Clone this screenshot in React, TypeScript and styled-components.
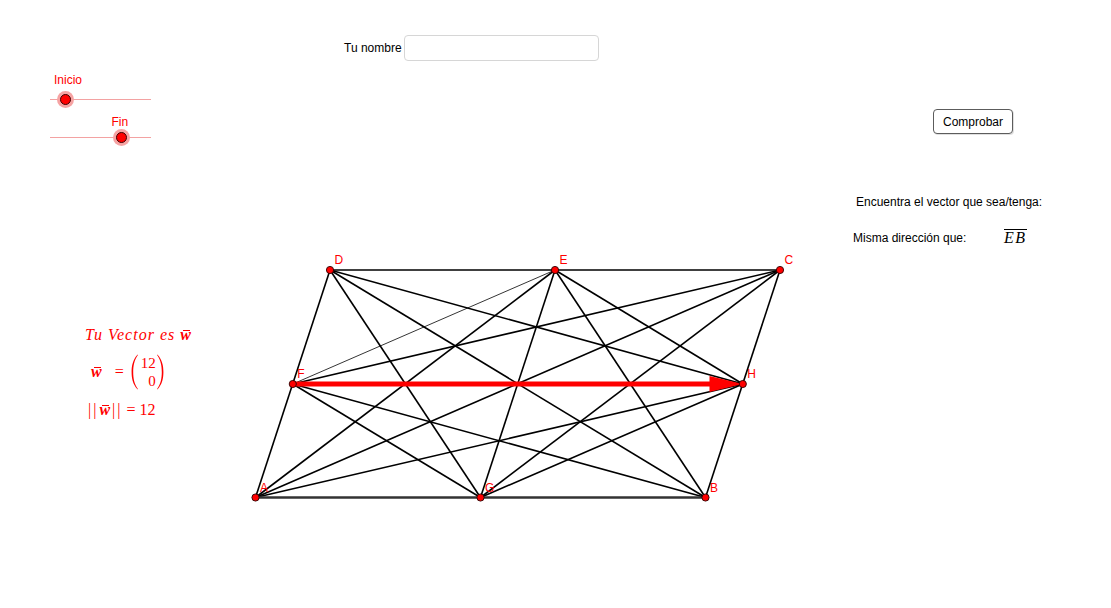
import React from "react";
import styled, { createGlobalStyle } from "styled-components";

const Global = createGlobalStyle`
  html, body { margin: 0; padding: 0; background: #fff; }
  body { font-family: "Liberation Sans", Arial, sans-serif; }
`;

const Applet = styled.div`
  position: relative;
  width: 1111px;
  height: 608px;
  overflow: hidden;
  background: #fff;
  font-family: "Liberation Sans", Arial, sans-serif;
  font-size: 12px;
  color: #000;
`;

/* ---------- sliders ---------- */
const SliderBox = styled.div<{ $x: number; $y: number; $w: number }>`
  position: absolute;
  left: ${(p) => p.$x}px;
  top: ${(p) => p.$y}px;
  width: ${(p) => p.$w}px;
  height: 1px;
`;

const Track = styled.div`
  position: absolute;
  left: 0;
  right: 0;
  top: 0;
  height: 1px;
  background: #f3a2a2;
`;

const Knob = styled.div`
  position: absolute;
  top: 0.5px;
  width: 11px;
  height: 11px;
  margin: -5.5px 0 0 -5.5px;
  box-sizing: border-box;
  border-radius: 50%;
  background: #ff0000;
  border: 1px solid #3b0000;
  box-shadow: 0 0 0 3px #f6a3a3;
`;

const SliderLabel = styled.span<{ $dx: number; $dy: number }>`
  position: absolute;
  left: ${(p) => p.$dx}px;
  top: ${(p) => p.$dy}px;
  color: #ff0000;
  font-size: 12px;
  line-height: 14px;
  white-space: nowrap;
`;

type SliderProps = {
  x: number;
  y: number;
  w: number;
  value: number;
  label: string;
  labelDx: number;
  labelDy: number;
};

const Slider = ({ x, y, w, value, label, labelDx, labelDy }: SliderProps) => (
  <SliderBox $x={x} $y={y} $w={w}>
    <SliderLabel $dx={labelDx} $dy={labelDy}>
      {label}
    </SliderLabel>
    <Track />
    <Knob style={{ left: `${value * w}px` }} />
  </SliderBox>
);

/* ---------- input ---------- */
const FieldRow = styled.label`
  position: absolute;
  left: 344px;
  top: 35px;
  display: flex;
  align-items: center;
  gap: 2px;
  font-size: 12px;
`;

const NameInput = styled.input`
  box-sizing: border-box;
  width: 195px;
  height: 26px;
  border: 1px solid #d6d6d6;
  border-radius: 4px;
  background: #fff;
  outline: none;
  padding: 0 6px;
  font: 12px "Liberation Sans", Arial, sans-serif;
`;

/* ---------- button ---------- */
const CheckButton = styled.button`
  position: absolute;
  left: 933px;
  top: 109px;
  box-sizing: border-box;
  width: 80px;
  height: 25px;
  padding: 0;
  background: #fff;
  border: 1px solid #5c5c5c;
  border-radius: 4px;
  box-shadow: 1px 1px 0 rgba(0, 0, 0, 0.12);
  font: 12px "Liberation Sans", Arial, sans-serif;
  color: #000;
`;

/* ---------- captions ---------- */
const Caption = styled.div<{ $x: number; $y: number }>`
  position: absolute;
  left: ${(p) => p.$x}px;
  top: ${(p) => p.$y}px;
  font-size: 12px;
  line-height: 14px;
  white-space: nowrap;
`;

const SegmentName = styled.span`
  position: absolute;
  left: 1004px;
  top: 229px;
  font-family: "Liberation Serif", "Times New Roman", serif;
  font-style: italic;
  font-size: 16px;
  letter-spacing: 1.5px;
  line-height: 16px;
  padding-right: 0.5px;
  border-top: 1px solid #000;
`;

/* ---------- math ---------- */
const MathLine = styled.div<{ $x: number; $y: number }>`
  position: absolute;
  left: ${(p) => p.$x}px;
  top: ${(p) => p.$y}px;
  display: flex;
  align-items: center;
  color: #ff0000;
  font-family: "Liberation Serif", "Times New Roman", serif;
  font-size: 16px;
  line-height: 18px;
  white-space: pre;
`;

const Italic = styled.span`
  font-style: italic;
  letter-spacing: 1px;
`;

const Vec = styled.span<{ $l?: number; $r?: number }>`
  position: relative;
  display: inline-block;
  margin-left: ${(p) => p.$l ?? 0}px;
  margin-right: ${(p) => p.$r ?? 0}px;
  font-style: italic;
  font-weight: bold;
  &::after {
    content: "";
    position: absolute;
    left: 2.5px;
    right: 1px;
    top: 4px;
    height: 1.2px;
    background: currentColor;
  }
`;

const Op = styled.span<{ $l?: number; $r?: number; $gap?: number }>`
  margin-left: ${(p) => p.$l ?? 0}px;
  margin-right: ${(p) => p.$r ?? 0}px;
  letter-spacing: ${(p) => p.$gap ?? 0}px;
`;

const Matrix = styled.span`
  display: inline-flex;
  align-items: stretch;
  height: 36px;
`;

const MatrixCol = styled.span`
  display: flex;
  flex-direction: column;
  align-items: flex-end;
  padding: 0 1px 0 3px;
  font-size: 15px;
  line-height: 18px;
`;

const Paren = ({ right }: { right?: boolean }) => (
  <svg width="7" height="36" viewBox="0 0 7 36" style={{ transform: right ? "scaleX(-1)" : undefined }}>
    <path d="M6.6,0.4 C1.6,6 0.6,12 0.6,18 C0.6,24 1.6,30 6.6,35.6 L6.9,35 C3.2,30 2.2,24 2.2,18 C2.2,12 3.2,6 6.9,1 Z" fill="#ff0000" />
  </svg>
);

/* ---------- geometry ---------- */
const Figure = styled.svg`
  position: absolute;
  left: 240px;
  top: 240px;
  overflow: visible;
`;

type Pt = { x: number; y: number };
const P: Record<string, Pt> = {
  A: { x: 255.5, y: 497.5 },
  G: { x: 480.5, y: 497.5 },
  B: { x: 705.5, y: 497.5 },
  F: { x: 292.8, y: 384 },
  H: { x: 742.8, y: 384 },
  D: { x: 330, y: 270 },
  E: { x: 555, y: 270 },
  C: { x: 780, y: 270 },
};

const segments: [string, string, number][] = [
  ["D", "C", 1.6],
  ["D", "A", 1.6],
  ["C", "B", 1.6],
  ["A", "C", 1.6],
  ["A", "E", 1.6],
  ["A", "H", 1.6],
  ["B", "D", 1.6],
  ["B", "E", 1.6],
  ["B", "F", 1.6],
  ["C", "F", 1.6],
  ["C", "G", 1.6],
  ["D", "G", 1.6],
  ["D", "H", 1.6],
  ["E", "F", 0.8],
  ["E", "G", 1.6],
  ["E", "H", 1.6],
  ["F", "G", 1.6],
  ["G", "H", 1.6],
];

const Geometry = () => (
  <Figure width="570" height="270" viewBox="240 240 570 270">
    {segments.map(([a, b, w]) => (
      <line key={a + b} x1={P[a].x} y1={P[a].y} x2={P[b].x} y2={P[b].y} stroke="#000" strokeWidth={w} />
    ))}
    <line x1={P.A.x} y1={P.A.y} x2={P.B.x} y2={P.B.y} stroke="#333" strokeWidth={2.4} />
    <line x1={P.F.x} y1={P.F.y} x2={712} y2={P.H.y} stroke="#ff0000" strokeWidth={5} />
    <polygon points={`709.5,376 ${P.H.x},${P.H.y} 709.5,392`} fill="#ff0000" />
    {Object.entries(P).map(([k, p]) => (
      <g key={k}>
        <circle cx={p.x} cy={p.y} r={3.6} fill="#ff0000" stroke="#2a0000" strokeWidth={0.9} />
        <text
          x={p.x + 4.5}
          y={p.y - 6}
          fill="#ff0000"
          fontSize="12"
          fontFamily="'Liberation Sans', Arial, sans-serif"
        >
          {k}
        </text>
      </g>
    ))}
  </Figure>
);

export default function App() {
  return (
    <>
      <Global />
      <Applet>
        <Slider x={50} y={99} w={101} value={0.155} label="Inicio" labelDx={4} labelDy={-26} />
        <Slider x={50} y={137} w={101} value={0.71} label="Fin" labelDx={61.5} labelDy={-22} />

        <FieldRow>
          Tu nombre
          <NameInput type="text" />
        </FieldRow>

        <CheckButton>Comprobar</CheckButton>

        <Caption $x={856} $y={195}>
          Encuentra el vector que sea/tenga:
        </Caption>
        <Caption $x={853} $y={231}>
          Misma dirección que:
        </Caption>
        <SegmentName>EB</SegmentName>

        <Geometry />

        <MathLine $x={85} $y={326}>
          <Italic>Tu Vector es </Italic>
          <Vec>w</Vec>
        </MathLine>

        <MathLine $x={91} $y={354}>
          <Vec>w</Vec>
          <Op $l={13} $r={7}>=</Op>
          <Matrix>
            <Paren />
            <MatrixCol>
              <span>12</span>
              <span>0</span>
            </MatrixCol>
            <Paren right />
          </Matrix>
        </MathLine>

        <MathLine $x={88} $y={401}>
          <Op $gap={2}>||</Op>
          <Vec $l={1} $r={2}>w</Vec>
          <Op $gap={2} $r={4}>||</Op>
          <Op $r={4}>=</Op>
          <Op>12</Op>
        </MathLine>
      </Applet>
    </>
  );
}
